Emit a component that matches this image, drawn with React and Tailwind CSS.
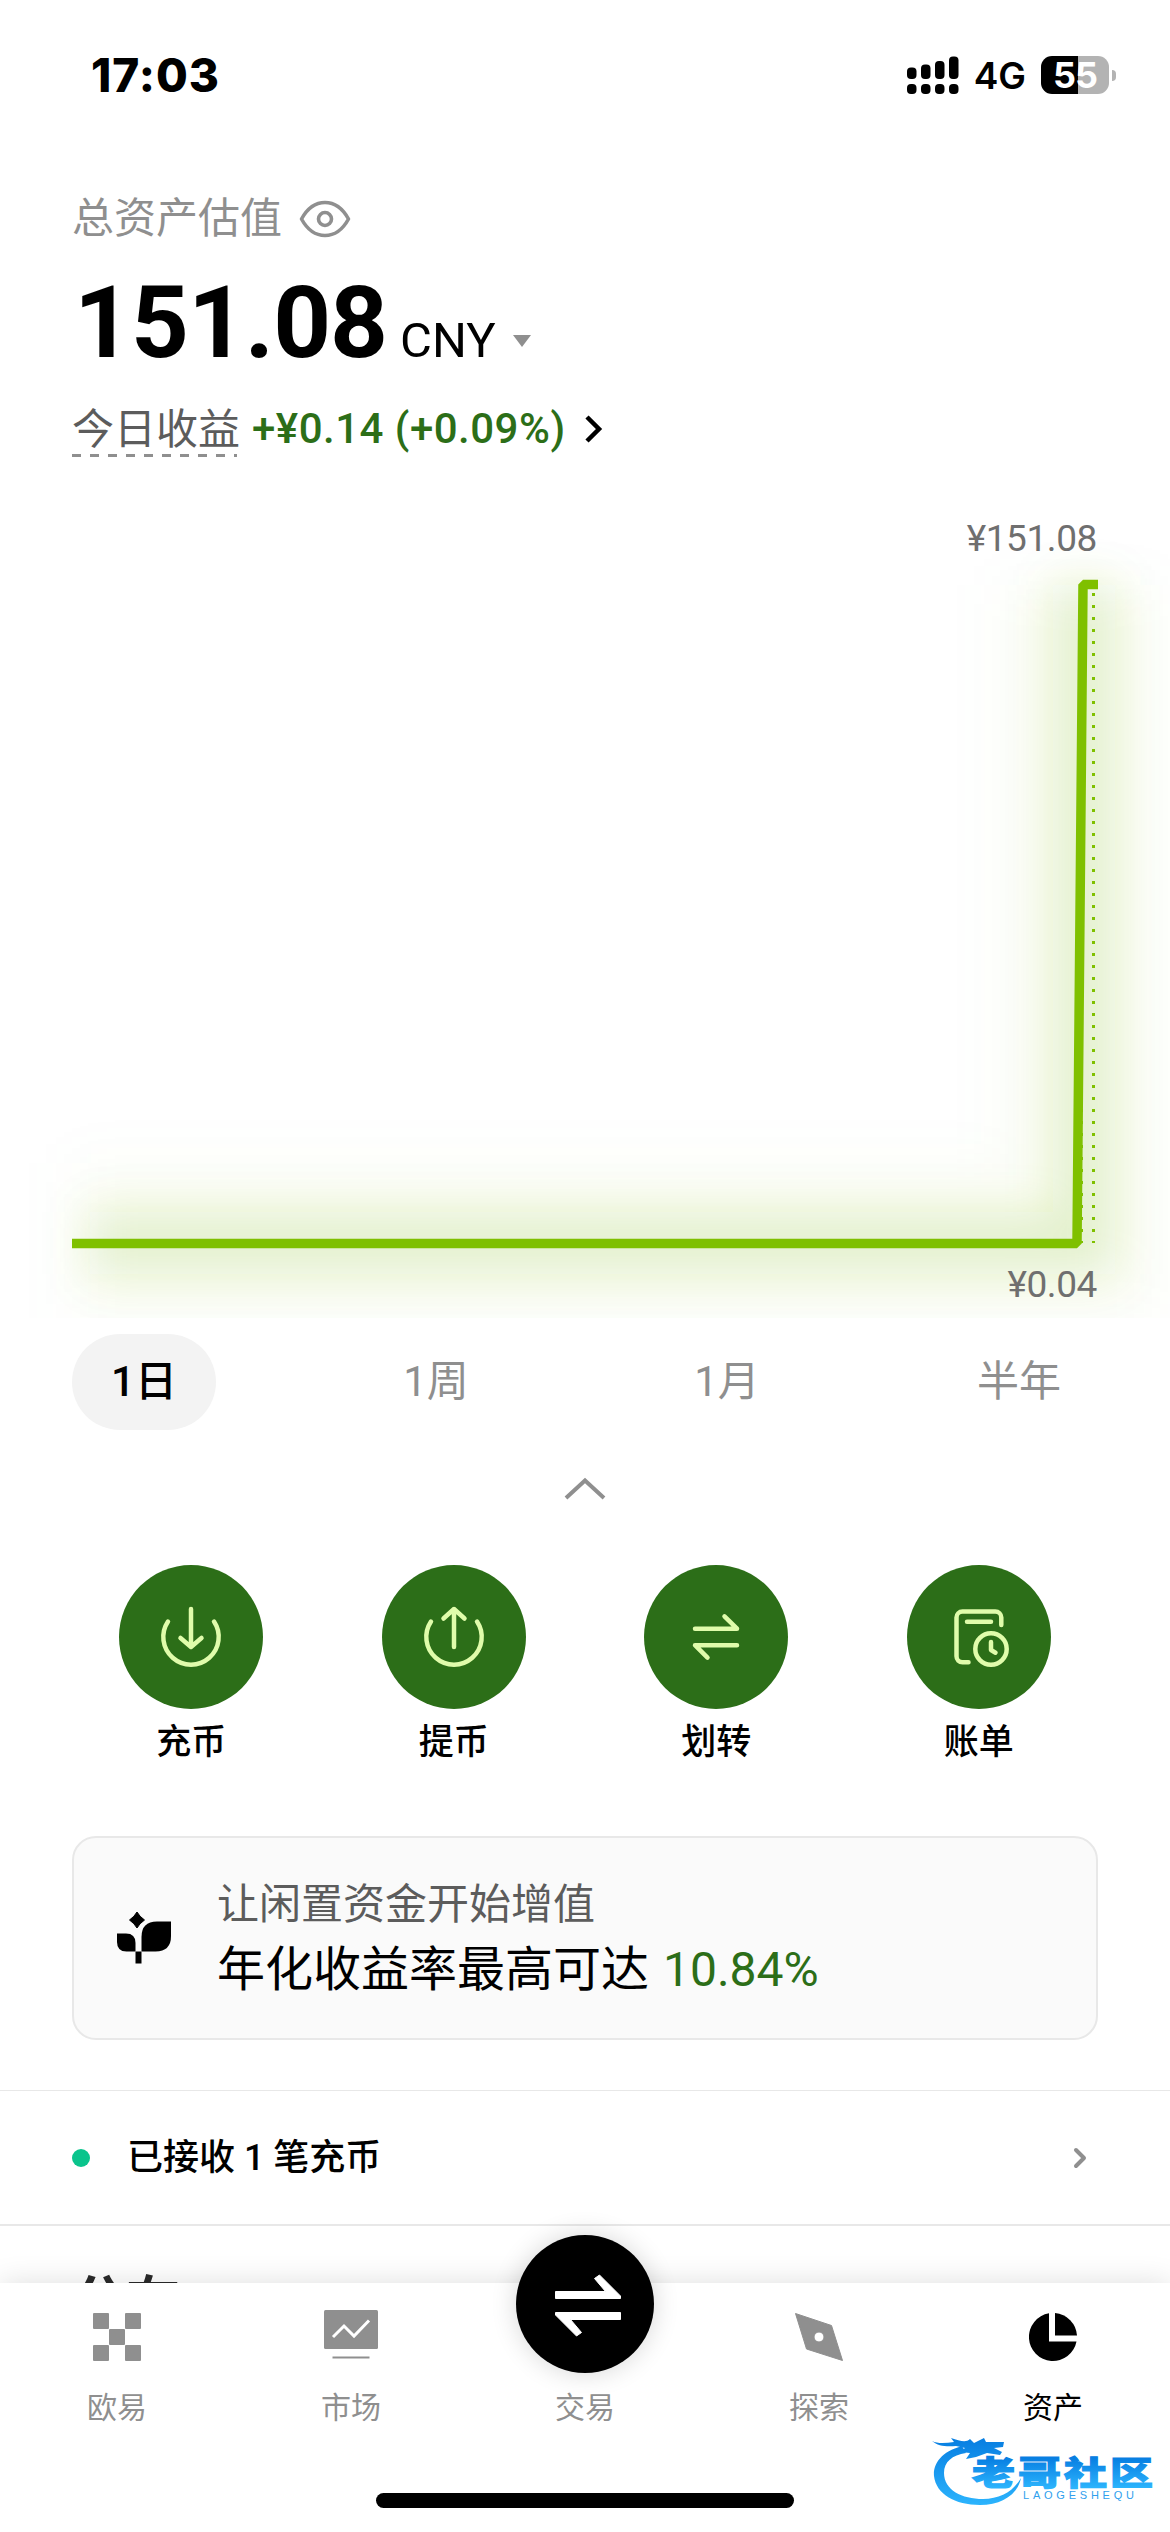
import { clsx } from "clsx";

const ranges = [
  { label: "1日", width: "w-36" },
  { label: "1周", width: "w-[156px]" },
  { label: "1月", width: "w-[142px]" },
  { label: "半年", width: "w-[158px]" },
];

const actions = [
  { label: "充币", icon: <DepositIcon /> },
  { label: "提币", icon: <WithdrawIcon /> },
  { label: "划转", icon: <TransferIcon /> },
  { label: "账单", icon: <BillIcon /> },
];

export default function App() {
  return (
    <div className="flex h-[2532px] w-[1170px] flex-col overflow-hidden bg-white font-['Roboto','Noto_Sans_CJK_SC',sans-serif] text-black">
      <StatusBar />

      <main className="min-h-0 flex-1 overflow-hidden">
        <Balance />
        <Chart />
        <RangeTabs />

        <div className="flex h-[135px] items-center justify-center pb-[17px]">
          <svg width="42" height="24" viewBox="0 0 42 24" fill="none" stroke="#8f8f8f" strokeWidth="4">
            <path d="M2 21 21 3.5 40 21" />
          </svg>
        </div>

        {/* Quick actions */}
        <div className="grid grid-cols-4 px-[60px]">
          {actions.map((a) => (
            <div key={a.label} className="flex flex-col items-center gap-[11px]">
              <div className="flex size-36 items-center justify-center rounded-full bg-[#2c6e18]">
                {a.icon}
              </div>
              <span className="text-[35px] font-medium leading-[46px]">{a.label}</span>
            </div>
          ))}
        </div>

        <EarnCard />
        <NoticeRow />

        <h2 className="px-[72px] pt-[44px] text-[54px] font-bold leading-[66px] text-[#2a2a2a]">分布</h2>
      </main>

      <BottomNav />
    </div>
  );
}

/* --- Status bar --- */

function StatusBar() {
  return (
    <div className="flex h-[150px] shrink-0 items-center justify-between pl-[91px] pr-[54px] font-['Inter',sans-serif]">
      <span className="text-[46px] font-extrabold leading-none tracking-[1px]">17:03</span>
      <div className="flex items-center">
        <svg width="52" height="38" viewBox="0 0 52 38">
          {[11, 8, 4.5, 0].map((y, i) => (
            <g key={i}>
              <rect x={i * 14} y={y + 0.5} width="9.5" height={22.5 - y} rx="4" />
              <rect x={i * 14} y="28" width="9.5" height="10" rx="4" />
            </g>
          ))}
        </svg>
        <span className="ml-[15px] text-[37px] font-semibold leading-none">4G</span>
        <div className="ml-[15px] flex h-[38px] w-[68px] items-center justify-center rounded-[11px] bg-[linear-gradient(90deg,#000_54%,#b3b3b3_54%)] text-[36px] font-bold leading-none tracking-[-1px] text-white">
          55
        </div>
        <div className="ml-[3px] h-[11px] w-1 rounded-r-full bg-[#b3b3b3]" />
      </div>
    </div>
  );
}

/* --- Balance --- */

function Balance() {
  return (
    <div className="h-[345px] px-[72px] pt-[39px]">
      <div className="flex h-[60px] items-center gap-[17px]">
        <span className="text-[42px] leading-[60px] text-[#8f8f8f]">总资产估值</span>
        <svg width="52" height="40" viewBox="0 0 52 40" fill="none" stroke="#8f8f8f" strokeWidth="3.6">
          <path d="M2.5 20C8 10 16 3.5 26 3.5S44 10 49.5 20C44 30 36 36.5 26 36.5S8 30 2.5 20Z" strokeLinejoin="round" />
          <circle cx="26" cy="20" r="6.5" />
        </svg>
      </div>

      <div className="mt-[19px] flex h-[110px] items-baseline">
        <span className="ml-[2px] text-[101px] font-bold leading-[110px] tracking-[-1px]">151.08</span>
        <span className="ml-[13px] text-[49px] leading-none">CNY</span>
        <svg className="ml-[17px] -translate-y-[10px]" width="18" height="12" viewBox="0 0 18 12">
          <path d="M0 0H18L9 12Z" fill="#8f8f8f" />
        </svg>
      </div>

      <div className="mt-[21px] flex h-[60px] items-center text-[42px] leading-[58px]">
        <div className="w-[165px] shrink-0">
          <div className="whitespace-nowrap text-[#5c5c5c]">今日收益</div>
          <div className="-mt-[5px] h-[3px] bg-[repeating-linear-gradient(90deg,#8f8f8f_0_9px,transparent_9px_18px)]" />
        </div>
        <span className="ml-[15px] whitespace-nowrap font-medium tracking-[0.5px] text-[#2c6e18]">+¥0.14 (+0.09%)</span>
        <svg className="ml-[17px]" width="20" height="30" viewBox="0 0 20 30" fill="none" stroke="#000" strokeWidth="4.5">
          <path d="M4 3 16 15 4 27" />
        </svg>
      </div>
    </div>
  );
}

/* --- Chart --- */

const LINE = "M72 748.5H1077L1083 89.5H1098";

function Chart() {
  return (
    <div className="relative h-[823px] overflow-hidden">
      <svg className="absolute inset-0" width="1170" height="823" viewBox="0 0 1170 823" fill="none">
        <defs>
          <filter id="glow" filterUnits="userSpaceOnUse" x="-100" y="-100" width="1400" height="1100">
            <feGaussianBlur stdDeviation="23" />
          </filter>
          <filter id="haze" filterUnits="userSpaceOnUse" x="-100" y="-100" width="1400" height="1100">
            <feGaussianBlur stdDeviation="28" />
          </filter>
        </defs>
        <path d="M72 748H1080V90" stroke="#8fbf20" strokeOpacity="0.035" strokeWidth="160" filter="url(#haze)" />
        <path d="M90 748H1084V90" stroke="#88c020" strokeOpacity="0.2" strokeWidth="62" filter="url(#glow)" />
        <path d="M1093.5 98V748" stroke="#7fc000" strokeWidth="3" strokeDasharray="3 9" />
        <path d="M1081.5 98V748" stroke="#7fc000" strokeWidth="3" strokeDasharray="3 9" />
        <path d={LINE} stroke="#7fc000" strokeWidth="9.5" strokeLinejoin="bevel" />
      </svg>
      <div className="relative flex h-full flex-col items-end justify-between pb-[8px] pr-[73px] pt-[19px] text-[37px] leading-[50px] tracking-[-0.4px] text-[#6f6f6f]">
        <span>¥151.08</span>
        <span>¥0.04</span>
      </div>
    </div>
  );
}

function RangeTabs() {
  return (
    <div className="flex justify-between px-[72px] pt-4 text-[42px]">
      {ranges.map((r, i) => (
        <div
          key={r.label}
          className={clsx(
            "flex h-24 items-center justify-center rounded-[48px] leading-none",
            r.width,
            i === 0 ? "bg-[#f3f3f3] font-medium text-black" : "text-[#8f8f8f]"
          )}
        >
          <span className="whitespace-nowrap">{r.label}</span>
        </div>
      ))}
    </div>
  );
}

/* --- Action icons, drawn around the centre of a 72px box --- */

function ActionSvg({ children }) {
  return (
    <svg
      width="72"
      height="72"
      viewBox="-36 -36 72 72"
      fill="none"
      stroke="#e0fcab"
      strokeWidth="4.5"
      strokeLinecap="round"
      strokeLinejoin="round"
    >
      {children}
    </svg>
  );
}

function DepositIcon() {
  return (
    <ActionSvg>
      <path d="M0-28V10M-10.5 1 0 10 10.5 1" />
      <path d="M-23-15.5A27.7 27.7 0 1 0 23-15.5" />
    </ActionSvg>
  );
}

function WithdrawIcon() {
  return (
    <ActionSvg>
      <path d="M0 10V-28M-10.5-18.5 0-28 10.5-18.5" />
      <path d="M-23-15.5A27.7 27.7 0 1 0 23-15.5" />
    </ActionSvg>
  );
}

function TransferIcon() {
  return (
    <ActionSvg>
      <path d="M-21-8.3H21L8.5-20.7M21 8.2H-21L-8.5 20.7" />
    </ActionSvg>
  );
}

function BillIcon() {
  return (
    <ActionSvg>
      <path d="M22.3-12V-19.5A6 6 0 0 0 16.3-25.5H-16.5A6 6 0 0 0-22.5-19.5V19.3A6 6 0 0 0-16.5 25.3H-10.5" />
      <path d="M-12-15.3H12M12 5V13L16.5 15.7" />
      <circle cx="12" cy="12" r="15.7" />
    </ActionSvg>
  );
}

/* --- Earn banner --- */

function EarnCard() {
  return (
    <div className="mx-[72px] mt-[70px] flex h-[204px] items-center rounded-[24px] border-2 border-[#e8e8e8] bg-[#fafafa] pl-[42px]">
      <svg width="58" height="58" viewBox="0 0 58 58" className="-mt-[3px]">
        <path d="M21 4Q23.5 8.5 28.5 12Q23.5 15.5 21 20Q18.5 15.5 13.5 12Q18.5 8.5 21 4Z" stroke="#000" />
        <path d="M55 13.5V28Q55 43.5 39.5 43.5H25.5V29Q25.5 13.5 41 13.5Z" />
        <path d="M1 25.5H10Q19.5 25.5 19.5 35V43.5H10.5Q1 43.5 1 34Z" />
        <rect x="19.5" y="43.5" width="6" height="12" />
      </svg>
      <div className="ml-[43px] pt-[3px]">
        <div className="text-[42px] leading-[60px] text-[#5c5c5c]">让闲置资金开始增值</div>
        <div className="text-[48px] leading-[70px]">
          年化收益率最高可达 <span className="ml-[2px] text-[#2c6e18]">10.84%</span>
        </div>
      </div>
    </div>
  );
}

function NoticeRow() {
  return (
    <div className="mt-[50px] flex h-[136px] items-center border-b-2 border-t border-[#e8e8e8] px-[72px]">
      <div className="size-[18px] rounded-full bg-[#0ac48c]" />
      <span className="ml-[37px] text-[36px] font-medium leading-[50px]">已接收 1 笔充币</span>
      <svg className="ml-auto mr-[10px]" width="16" height="24" viewBox="0 0 16 24" fill="none" stroke="#8f8f8f" strokeWidth="4" strokeLinecap="round" strokeLinejoin="round">
        <path d="M4 4 12 12 4 20" />
      </svg>
    </div>
  );
}

/* --- Bottom navigation --- */

function BottomNav() {
  return (
    <nav className="relative flex h-[249px] shrink-0 flex-col items-center bg-white shadow-[0_0_28px_rgba(0,0,0,0.13)]">
      <div className="grid h-[154px] w-full grid-cols-5 text-[30px] text-[#8f8f8f]">
        <NavItem label="欧易">
          <svg width="48" height="48" viewBox="0 0 48 48" fill="#8f8f8f">
            <rect width="16" height="16" rx="1" />
            <rect x="32" width="16" height="16" rx="1" />
            <rect x="16" y="16" width="16" height="16" rx="1" />
            <rect y="32" width="16" height="16" rx="1" />
            <rect x="32" y="32" width="16" height="16" rx="1" />
          </svg>
        </NavItem>
        <NavItem label="市场">
          <svg width="54" height="54" viewBox="0 0 54 54" fill="none">
            <rect width="54" height="39" rx="1.5" fill="#8f8f8f" />
            <path d="M9 27 20 16 30 26 45 10.5" stroke="#fff" strokeWidth="3" />
            <path d="M8.5 47.5H45.5" stroke="#8f8f8f" strokeWidth="2" />
          </svg>
        </NavItem>
        <NavItem label="交易">
          <div className="flex size-[138px] items-center justify-center rounded-full bg-black shadow-[0_0_26px_rgba(0,0,0,0.16)]">
            <svg width="80" height="80" viewBox="-40 -40 80 80" fill="#fff" stroke="#fff" strokeLinejoin="round">
              <path d="M-29.5-12.5H20.5L9.5-25.5 14.5-29 35.5-8V-5.5H-29.5Z" />
              <path d="M35.5 15.5H-14.5L-3.5 28.5-8.5 32-29.5 11V8.5H35.5Z" />
            </svg>
          </div>
        </NavItem>
        <NavItem label="探索">
          <svg width="48" height="48" viewBox="0 0 48 48">
            <path
              fill="#8f8f8f"
              stroke="#8f8f8f"
              strokeLinejoin="round"
              fillRule="evenodd"
              d="M.5.5 36.5 12.5 47.5 47.5 11.5 36ZM24 19a5 5 0 1 0 0 10a5 5 0 1 0 0-10Z"
            />
          </svg>
        </NavItem>
        <NavItem label="资产" active>
          <svg width="48" height="48" viewBox="0 0 48 48">
            <path d="M26 0A24 24 0 0 1 48 22.5H26Z" />
            <path d="M20 .3A24 24 0 1 0 47.5 28.5H20Z" />
          </svg>
        </NavItem>
      </div>
      <div className="mt-[56px] h-[15px] w-[418px] rounded-full bg-black" />
      <Watermark />
    </nav>
  );
}

function NavItem({ label, active, children }) {
  return (
    <div className={clsx("flex flex-col items-center", active && "text-black")}>
      {/* the trade button is taller than this row and spills over the bar's top edge */}
      <div className="flex h-[108px] items-center justify-center">
        <div className={clsx(label === "交易" && "-translate-y-[33px]")}>{children}</div>
      </div>
      <span className="-mt-[3px] leading-[40px]">{label}</span>
    </div>
  );
}

function Watermark() {
  return (
    <svg className="absolute bottom-0 right-0" width="250" height="112" viewBox="920 2420 250 112">
      <defs>
        <linearGradient id="wm" gradientUnits="userSpaceOnUse" x1="0" y1="2440" x2="0" y2="2505">
          <stop offset="0" stopColor="#087fe2" />
          <stop offset="1" stopColor="#2cb4fd" />
        </linearGradient>
        <linearGradient id="wmText" gradientUnits="userSpaceOnUse" x1="0" y1="-35" x2="0" y2="4">
          <stop offset="0" stopColor="#087fe2" />
          <stop offset="1" stopColor="#2cb4fd" />
        </linearGradient>
      </defs>
      <g fill="url(#wm)">
        <path d="M962 2446C940 2452 933 2465 934 2476C936 2494 955 2505 980 2505C1002 2505 1018 2494 1021 2478C1013 2492 1000 2499 983 2499C962 2499 944 2490 944 2473C944 2462 952 2455 966 2453Z" />
        <path d="M932 2441C938 2444 946 2443 954 2442L951 2438C960 2441 966 2443 970 2439L974 2443 984 2438 986 2442 1004 2442 1003 2447 994 2448 1002 2452 1000 2455 987 2453 976 2457 966 2459 970 2453 960 2452 965 2448 956 2446C946 2447 938 2446 932 2441Z" />
      </g>
      <text
        transform="translate(972 2485) scale(1 .76)"
        fill="url(#wmText)"
        stroke="url(#wmText)"
        strokeWidth="1.5"
        className="font-['Noto_Sans_CJK_SC',sans-serif] text-[43px] font-black"
        textLength="181"
      >
        老哥社区
      </text>
      <text x="1023" y="2499" fill="#2fa0ee" className="font-['Liberation_Sans',sans-serif] text-[11px]" textLength="111">
        LAOGESHEQU
      </text>
    </svg>
  );
}
